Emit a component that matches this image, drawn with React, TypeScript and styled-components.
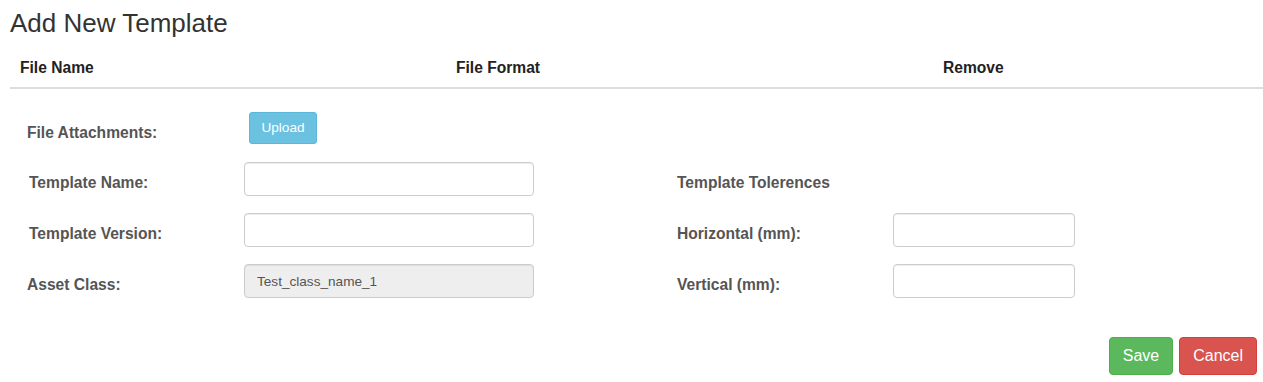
import React from 'react';
import styled, { createGlobalStyle } from 'styled-components';

const GlobalStyle = createGlobalStyle`
  html, body {
    margin: 0;
    padding: 0;
    background: #fff;
    font-family: 'Liberation Sans', Arial, Helvetica, sans-serif;
    font-size: 14px;
    color: #333;
  }
  * { box-sizing: border-box; }
`;

export default function App() {
  return (
    <Page>
      <GlobalStyle />
      <Title>Add New Template</Title>
      <FileTable>
        <HeadCell>File Name</HeadCell>
        <HeadCell>File Format</HeadCell>
        <HeadCell>Remove</HeadCell>
      </FileTable>
      <FormGrid>
        <Label $inset={0}>File Attachments:</Label>
        <ControlCell>
          <UploadButton type="button">Upload</UploadButton>
        </ControlCell>
        <Spacer />
        <Spacer />
        <Spacer />

        <Label $inset={2}>Template Name:</Label>
        <ControlCell>
          <TextInput type="text" />
        </ControlCell>
        <Spacer />
        <Label $inset={0}>Template Tolerences</Label>
        <Spacer />

        <Label $inset={2}>Template Version:</Label>
        <ControlCell>
          <TextInput type="text" />
        </ControlCell>
        <Spacer />
        <Label $inset={0}>Horizontal (mm):</Label>
        <ControlCell>
          <TextInput type="text" />
        </ControlCell>

        <Label $inset={0}>Asset Class:</Label>
        <ControlCell>
          <TextInput type="text" value="Test_class_name_1" readOnly disabled />
        </ControlCell>
        <Spacer />
        <Label $inset={0}>Vertical (mm):</Label>
        <ControlCell>
          <TextInput type="text" />
        </ControlCell>
      </FormGrid>
      <Footer>
        <ActionButton $tone="save" type="button">Save</ActionButton>
        <ActionButton $tone="cancel" type="button">Cancel</ActionButton>
      </Footer>
    </Page>
  );
}

const Page = styled.div`
  padding: 0 6px 0 10px;
`;

const Title = styled.h3`
  margin: 9px 0 0;
  font-size: 26px;
  line-height: 28px;
  font-weight: 400;
  color: #333;
`;

const FileTable = styled.div`
  display: grid;
  grid-template-columns: 436px 487px 1fr;
  margin: 13px -6px 0 0;
  border-bottom: 2px solid #ddd;
`;

const HeadCell = styled.div`
  padding: 8px 10px 9px;
  line-height: 20px;
  font-size: 15.6px;
  font-weight: 700;
  color: #222;
`;

const FormGrid = styled.div`
  display: grid;
  grid-template-columns: 217px 290px 143px 216px 182px;
  grid-template-rows: 33px 34px 34px 34px;
  row-gap: 17px;
  margin-top: 23px;
  padding-left: 17px;
`;

const Label = styled.div<{ $inset: number }>`
  padding-top: 11px;
  padding-left: ${(p) => p.$inset}px;
  line-height: 20px;
  font-size: 15.6px;
  font-weight: 700;
  color: #555;
  white-space: nowrap;
`;

const ControlCell = styled.div`
  display: flex;
  align-items: flex-start;
`;

const Spacer = styled.div``;

const UploadButton = styled.button`
  margin-left: 5px;
  width: 68px;
  height: 32px;
  padding: 0 0 2px;
  font-family: inherit;
  font-size: 13.6px;
  color: #fff;
  background: #6bc1e0;
  border: 1px solid #5bb8da;
  border-radius: 3px;
  cursor: pointer;
`;

const TextInput = styled.input`
  width: 100%;
  height: 34px;
  padding: 6px 12px;
  font-family: inherit;
  font-size: 13.6px;
  color: #555;
  background: #fff;
  border: 1px solid #ccc;
  border-radius: 4px;
  box-shadow: inset 0 1px 1px rgba(0, 0, 0, 0.075);
  outline: none;
  &:disabled {
    background: #eee;
    color: #555;
    -webkit-text-fill-color: #555;
    opacity: 1;
  }
`;

const Footer = styled.div`
  display: flex;
  justify-content: flex-end;
  gap: 6px;
  margin-top: 39px;
`;

const ActionButton = styled.button<{ $tone: 'save' | 'cancel' }>`
  height: 38px;
  padding: 0 13px;
  font-family: inherit;
  font-size: 16px;
  color: #fff;
  border-radius: 4px;
  cursor: pointer;
  background: ${(p) => (p.$tone === 'save' ? '#5cb85c' : '#d9534f')};
  border: 1px solid ${(p) => (p.$tone === 'save' ? '#4cae4c' : '#d43f3a')};
`;
